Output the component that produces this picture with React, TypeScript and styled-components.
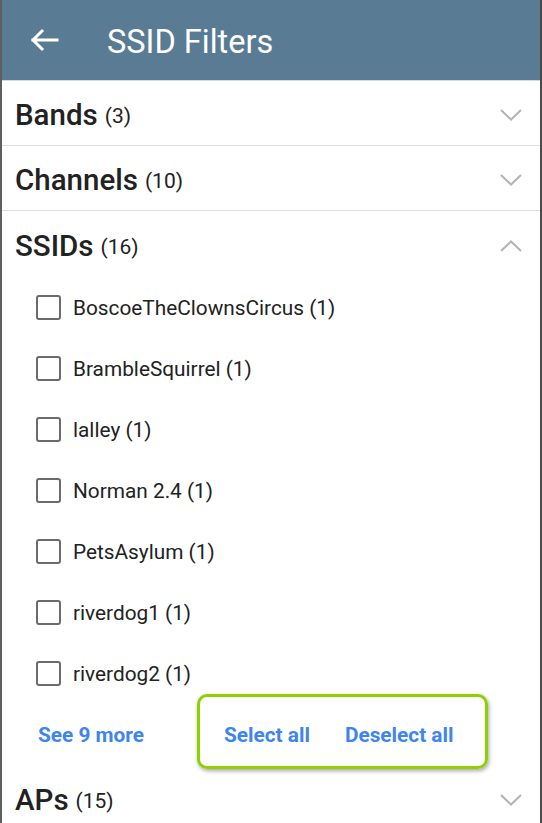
import React from "react";
import styled, { createGlobalStyle } from "styled-components";

const Global = createGlobalStyle`
  html, body { margin: 0; padding: 0; background: #fff; }
  body { font-family: Roboto, "Noto Sans", sans-serif; overflow: hidden; }
  * { box-sizing: border-box; }
`;

const Frame = styled.div`
  width: 542px;
  height: 823px;
  border-left: 2px solid #5e5e5e;
  border-right: 2px solid #4a4a4a;
  overflow: hidden;
  display: flex;
  flex-direction: column;
  background: #fff;
`;

const Header = styled.header`
  height: 81px;
  flex: none;
  background: #5a7b94;
  border-bottom: 1px solid #d8d8d8;
  display: flex;
  align-items: center;
  padding-left: 28px;
  gap: 47px;
  color: #fff;
`;

const Title = styled.h1`
  margin: 0;
  font-size: 32.5px;
  font-weight: 400;
  padding-top: 3px;
`;

const SectionRow = styled.div<{ $h?: number; $divider?: boolean }>`
  height: ${(p) => p.$h ?? 65}px;
  flex: none;
  display: flex;
  align-items: center;
  padding: 3px 18px 0 13px;
  border-bottom: ${(p) => (p.$divider ? "1px solid #dedede" : "none")};
`;

const SectionName = styled.span`
  font-size: 29.5px;
  font-weight: 500;
  color: #222;
`;

const Count = styled.span`
  font-size: 21px;
  color: #222;
  margin-left: 7px;
  margin-top: 2px;
  flex: 1;
`;

const Items = styled.div`
  display: flex;
  flex-direction: column;
`;

const Item = styled.label`
  height: 61px;
  flex: none;
  display: flex;
  align-items: center;
  padding-left: 34px;
  gap: 12px;
  font-size: 20.8px;
  color: #222;
`;

const Box = styled.span`
  width: 25px;
  height: 25px;
  border: 2px solid #6b6b6b;
  border-radius: 3px;
  flex: none;
`;

const Footer = styled.div`
  height: 62px;
  flex: none;
  display: flex;
  align-items: center;
  padding-left: 36px;
`;

const LinkBtn = styled.span`
  font-size: 20.8px;
  font-weight: 700;
  color: #3f85ef;
`;

const Highlight = styled.div`
  margin-left: 53px;
  width: 291px;
  height: 75px;
  border: 3px solid #8fd100;
  border-radius: 10px;
  box-shadow: 1px 2px 4px rgba(0,0,0,0.35);
  display: flex;
  align-items: center;
  padding: 6px 0 0 24px;
  gap: 35px;
  margin-top: -7px;
`;

const Chevron = ({ up }: { up?: boolean }) => (
  <svg width="22" height="12" viewBox="0 0 22 12" fill="none">
    <path
      d={up ? "M1 11 L11 1.5 L21 11" : "M1 1 L11 10.5 L21 1"}
      stroke="#b3b3b3"
      strokeWidth="2"
    />
  </svg>
);

const BackArrow = () => (
  <svg width="30" height="24" viewBox="0 0 30 24" fill="none">
    <path d="M27 12 H3 M12 3 L3 12 L12 21" stroke="#fff" strokeWidth="3" strokeLinecap="square" />
  </svg>
);

const ssids = [
  "BoscoeTheClownsCircus (1)",
  "BrambleSquirrel (1)",
  "lalley (1)",
  "Norman 2.4 (1)",
  "PetsAsylum (1)",
  "riverdog1 (1)",
  "riverdog2 (1)",
];

export default function App() {
  return (
    <>
      <Global />
      <Frame>
        <Header>
          <BackArrow />
          <Title>SSID Filters</Title>
        </Header>
        <SectionRow $divider>
          <SectionName>Bands</SectionName>
          <Count>(3)</Count>
          <Chevron />
        </SectionRow>
        <SectionRow $divider>
          <SectionName>Channels</SectionName>
          <Count>(10)</Count>
          <Chevron />
        </SectionRow>
        <SectionRow $h={66}>
          <SectionName>SSIDs</SectionName>
          <Count>(16)</Count>
          <Chevron up />
        </SectionRow>
        <Items>
          {ssids.map((s) => (
            <Item key={s}>
              <Box />
              {s}
            </Item>
          ))}
        </Items>
        <Footer>
          <LinkBtn>See 9 more</LinkBtn>
          <Highlight>
            <LinkBtn>Select all</LinkBtn>
            <LinkBtn>Deselect all</LinkBtn>
          </Highlight>
        </Footer>
        <SectionRow>
          <SectionName>APs</SectionName>
          <Count>(15)</Count>
          <Chevron />
        </SectionRow>
      </Frame>
    </>
  );
}
